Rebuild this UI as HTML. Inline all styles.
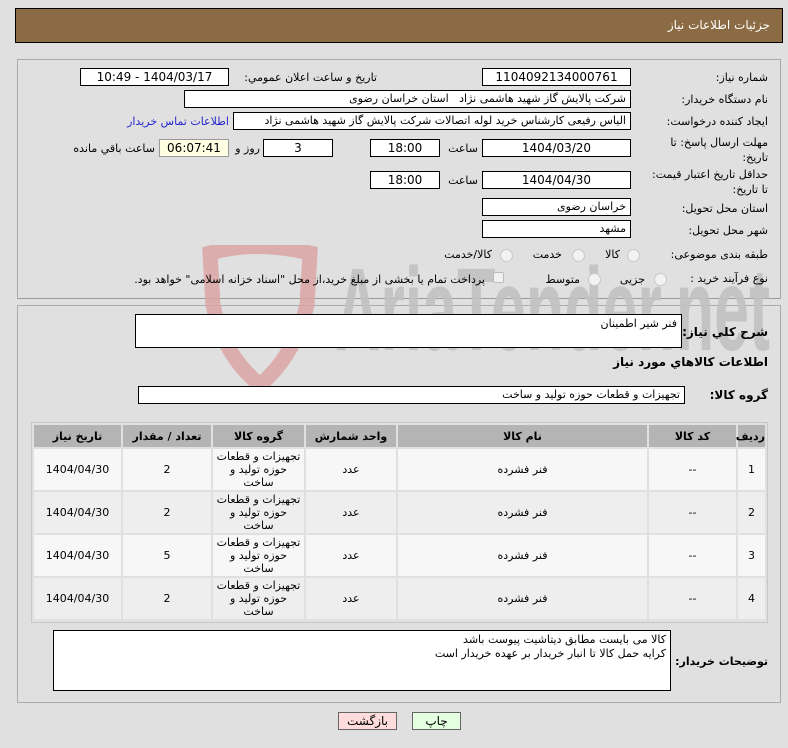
<!DOCTYPE html>
<html><head><meta charset="utf-8">
<style>
*{margin:0;padding:0;box-sizing:border-box}
body{width:788px;height:748px;background:#e0e0e0;font-family:"DejaVu Sans","Liberation Sans",sans-serif;font-size:11px;color:#000;position:relative;overflow:hidden}
.a{position:absolute;white-space:nowrap}
.lab{position:absolute;white-space:nowrap;direction:rtl;text-align:right}
.box{position:absolute;background:#fff;border:1px solid #000;direction:rtl;padding:0 4px;line-height:16px;white-space:nowrap;overflow:hidden}
.c{text-align:center}
.rad{position:absolute;width:13px;height:13px;border-radius:50%;border:1px solid #c8c8c8;background:#f2f2f2}
table{border-collapse:separate;border-spacing:2px;direction:rtl;table-layout:fixed}
td,th{text-align:center;font-size:11px}
th{background:#b4b4b4;height:22px;font-weight:bold}
tr.o td{background:#f7f7f7}
tr.e td{background:#eeeeee}
td{height:41px;line-height:13px}
</style></head><body>
<div class="a" style="left:15px;top:8px;width:768px;height:35px;background:#8b6b43;border:1px solid #000"></div>
<div class="lab" style="right:18px;top:18px;color:#fff;font-size:12px">جزئیات اطلاعات نیاز</div>

<div class="a" style="left:17px;top:59px;width:764px;height:240px;border:1px solid #aaa;border-bottom:1px solid #999"></div>
<div class="a" style="left:17px;top:305px;width:764px;height:398px;border:1px solid #aaa"></div>

<!-- watermark -->
<svg class="a" style="left:195px;top:245px" width="580" height="145" viewBox="0 0 580 145">
<path d="M15 8 Q60 -5 115 8 L112 60 Q100 110 65 140 Q28 110 18 60 Z" fill="none" stroke="#d9a3a3" stroke-width="15" opacity="0.85"/>
<text x="140" y="105" font-family="Liberation Sans,sans-serif" font-weight="bold" font-size="118" fill="#c2c2c2" textLength="435" lengthAdjust="spacingAndGlyphs" opacity="0.9">AriaTender.net</text>
</svg>

<div class="lab" style="right:20px;top:71px">شماره نیاز:</div>
<div class="box c" style="left:482px;top:68px;width:149px;height:18px;font-size:12px">1104092134000761</div>
<div class="lab" style="right:411px;top:71px">تاریخ و ساعت اعلان عمومي:</div>
<div class="box c" style="left:80px;top:68px;width:149px;height:18px;font-size:12px">1404/03/17 - 10:49</div>

<div class="lab" style="right:20px;top:93px">نام دستگاه خریدار:</div>
<div class="box" style="left:184px;top:90px;width:447px;height:18px">شرکت پالایش گاز شهید هاشمی نژاد &nbsp; استان خراسان رضوی</div>

<div class="lab" style="right:20px;top:115px">ایجاد کننده درخواست:</div>
<div class="box" style="left:233px;top:112px;width:398px;height:18px">الیاس رفیعی کارشناس خرید لوله اتصالات شرکت پالایش گاز شهید هاشمی نژاد</div>
<div class="lab" style="right:559px;top:115px;color:#2525d0">اطلاعات تماس خریدار</div>

<div class="lab" style="right:20px;top:135px;line-height:15px">مهلت ارسال پاسخ: تا<br>تاریخ:</div>
<div class="box c" style="left:482px;top:139px;width:149px;height:18px;font-size:12px">1404/03/20</div>
<div class="lab" style="right:310px;top:142px">ساعت</div>
<div class="box c" style="left:370px;top:139px;width:70px;height:18px;font-size:12px">18:00</div>
<div class="box c" style="left:263px;top:139px;width:70px;height:18px;font-size:12px">3</div>
<div class="lab" style="right:528px;top:142px">روز و</div>
<div class="box c" style="left:159px;top:139px;width:70px;height:18px;font-size:12px;background:#ffffe4;border-color:#999">06:07:41</div>
<div class="lab" style="right:633px;top:142px">ساعت باقي مانده</div>

<div class="lab" style="right:20px;top:167px;line-height:15px">حداقل تاریخ اعتبار قیمت:<br>تا تاریخ:</div>
<div class="box c" style="left:482px;top:171px;width:149px;height:18px;font-size:12px">1404/04/30</div>
<div class="lab" style="right:310px;top:174px">ساعت</div>
<div class="box c" style="left:370px;top:171px;width:70px;height:18px;font-size:12px">18:00</div>

<div class="lab" style="right:20px;top:202px">استان محل تحویل:</div>
<div class="box" style="left:482px;top:198px;width:149px;height:18px">خراسان رضوی</div>
<div class="lab" style="right:20px;top:224px">شهر محل تحویل:</div>
<div class="box" style="left:482px;top:220px;width:149px;height:18px">مشهد</div>

<div class="lab" style="right:20px;top:248px">طبقه بندی موضوعی:</div>
<div class="rad" style="left:627px;top:249px"></div><div class="lab" style="right:168px;top:248px">کالا</div>
<div class="rad" style="left:572px;top:249px"></div><div class="lab" style="right:226px;top:248px">خدمت</div>
<div class="rad" style="left:500px;top:249px"></div><div class="lab" style="right:296px;top:248px">کالا/خدمت</div>

<div class="lab" style="right:20px;top:272px">نوع فرآیند خرید :</div>
<div class="rad" style="left:654px;top:273px"></div><div class="lab" style="right:143px;top:273px">جزیی</div>
<div class="rad" style="left:588px;top:273px"></div><div class="lab" style="right:208px;top:273px">متوسط</div>
<div class="a" style="left:493px;top:272px;width:11px;height:11px;border:1px solid #bbb;background:#f2f2f2;border-radius:2px"></div>
<div class="lab" style="right:303px;top:273px">پرداخت تمام یا بخشی از مبلغ خرید،از محل "اسناد خزانه اسلامی" خواهد بود.</div>

<div class="lab" style="right:20px;top:325px;font-weight:bold;font-size:12px">شرح کلي نیاز:</div>
<div class="box" style="left:135px;top:314px;width:547px;height:34px;line-height:18px">فنر شیر اطمینان</div>
<div class="lab" style="right:20px;top:355px;font-weight:bold;font-size:12px">اطلاعات کالاهاي مورد نیاز</div>
<div class="lab" style="right:20px;top:388px;font-weight:bold;font-size:12px">گروه کالا:</div>
<div class="box" style="left:138px;top:386px;width:547px;height:18px">تجهیزات و قطعات حوزه تولید و ساخت</div>

<div class="a" style="left:31px;top:422px;width:737px;height:201px;border:1px solid #c8c8c8">
<table style="position:absolute;left:0;top:0;width:735px">
<tr><th style="width:27px">ردیف</th><th style="width:87px">کد کالا</th><th style="width:249px">نام کالا</th><th style="width:90px">واحد شمارش</th><th style="width:91px">گروه کالا</th><th style="width:88px">تعداد / مقدار</th><th>تاریخ نیاز</th></tr>
<tr class="o"><td>1</td><td>--</td><td>فنر فشرده</td><td>عدد</td><td>تجهیزات و قطعات<br>حوزه تولید و<br>ساخت</td><td>2</td><td>1404/04/30</td></tr>
<tr class="e"><td>2</td><td>--</td><td>فنر فشرده</td><td>عدد</td><td>تجهیزات و قطعات<br>حوزه تولید و<br>ساخت</td><td>2</td><td>1404/04/30</td></tr>
<tr class="o"><td>3</td><td>--</td><td>فنر فشرده</td><td>عدد</td><td>تجهیزات و قطعات<br>حوزه تولید و<br>ساخت</td><td>5</td><td>1404/04/30</td></tr>
<tr class="e"><td>4</td><td>--</td><td>فنر فشرده</td><td>عدد</td><td>تجهیزات و قطعات<br>حوزه تولید و<br>ساخت</td><td>2</td><td>1404/04/30</td></tr>
</table></div>

<div class="lab" style="right:20px;top:655px;font-weight:bold;font-size:11px">توضیحات خریدار:</div>
<div class="box" style="left:53px;top:630px;width:618px;height:61px;line-height:14px;padding-top:2px">کالا می بایست مطابق دیتاشیت پیوست باشد<br>کرایه حمل کالا تا انبار خریدار بر عهده خریدار است</div>

<div class="a c" style="left:338px;top:712px;width:59px;height:18px;background:#ffdcdc;border:1px solid #666;line-height:16px;font-size:12px">بازگشت</div>
<div class="a c" style="left:412px;top:712px;width:49px;height:18px;background:#e4ffe0;border:1px solid #666;line-height:16px;font-size:12px">چاپ</div>
</body></html>
